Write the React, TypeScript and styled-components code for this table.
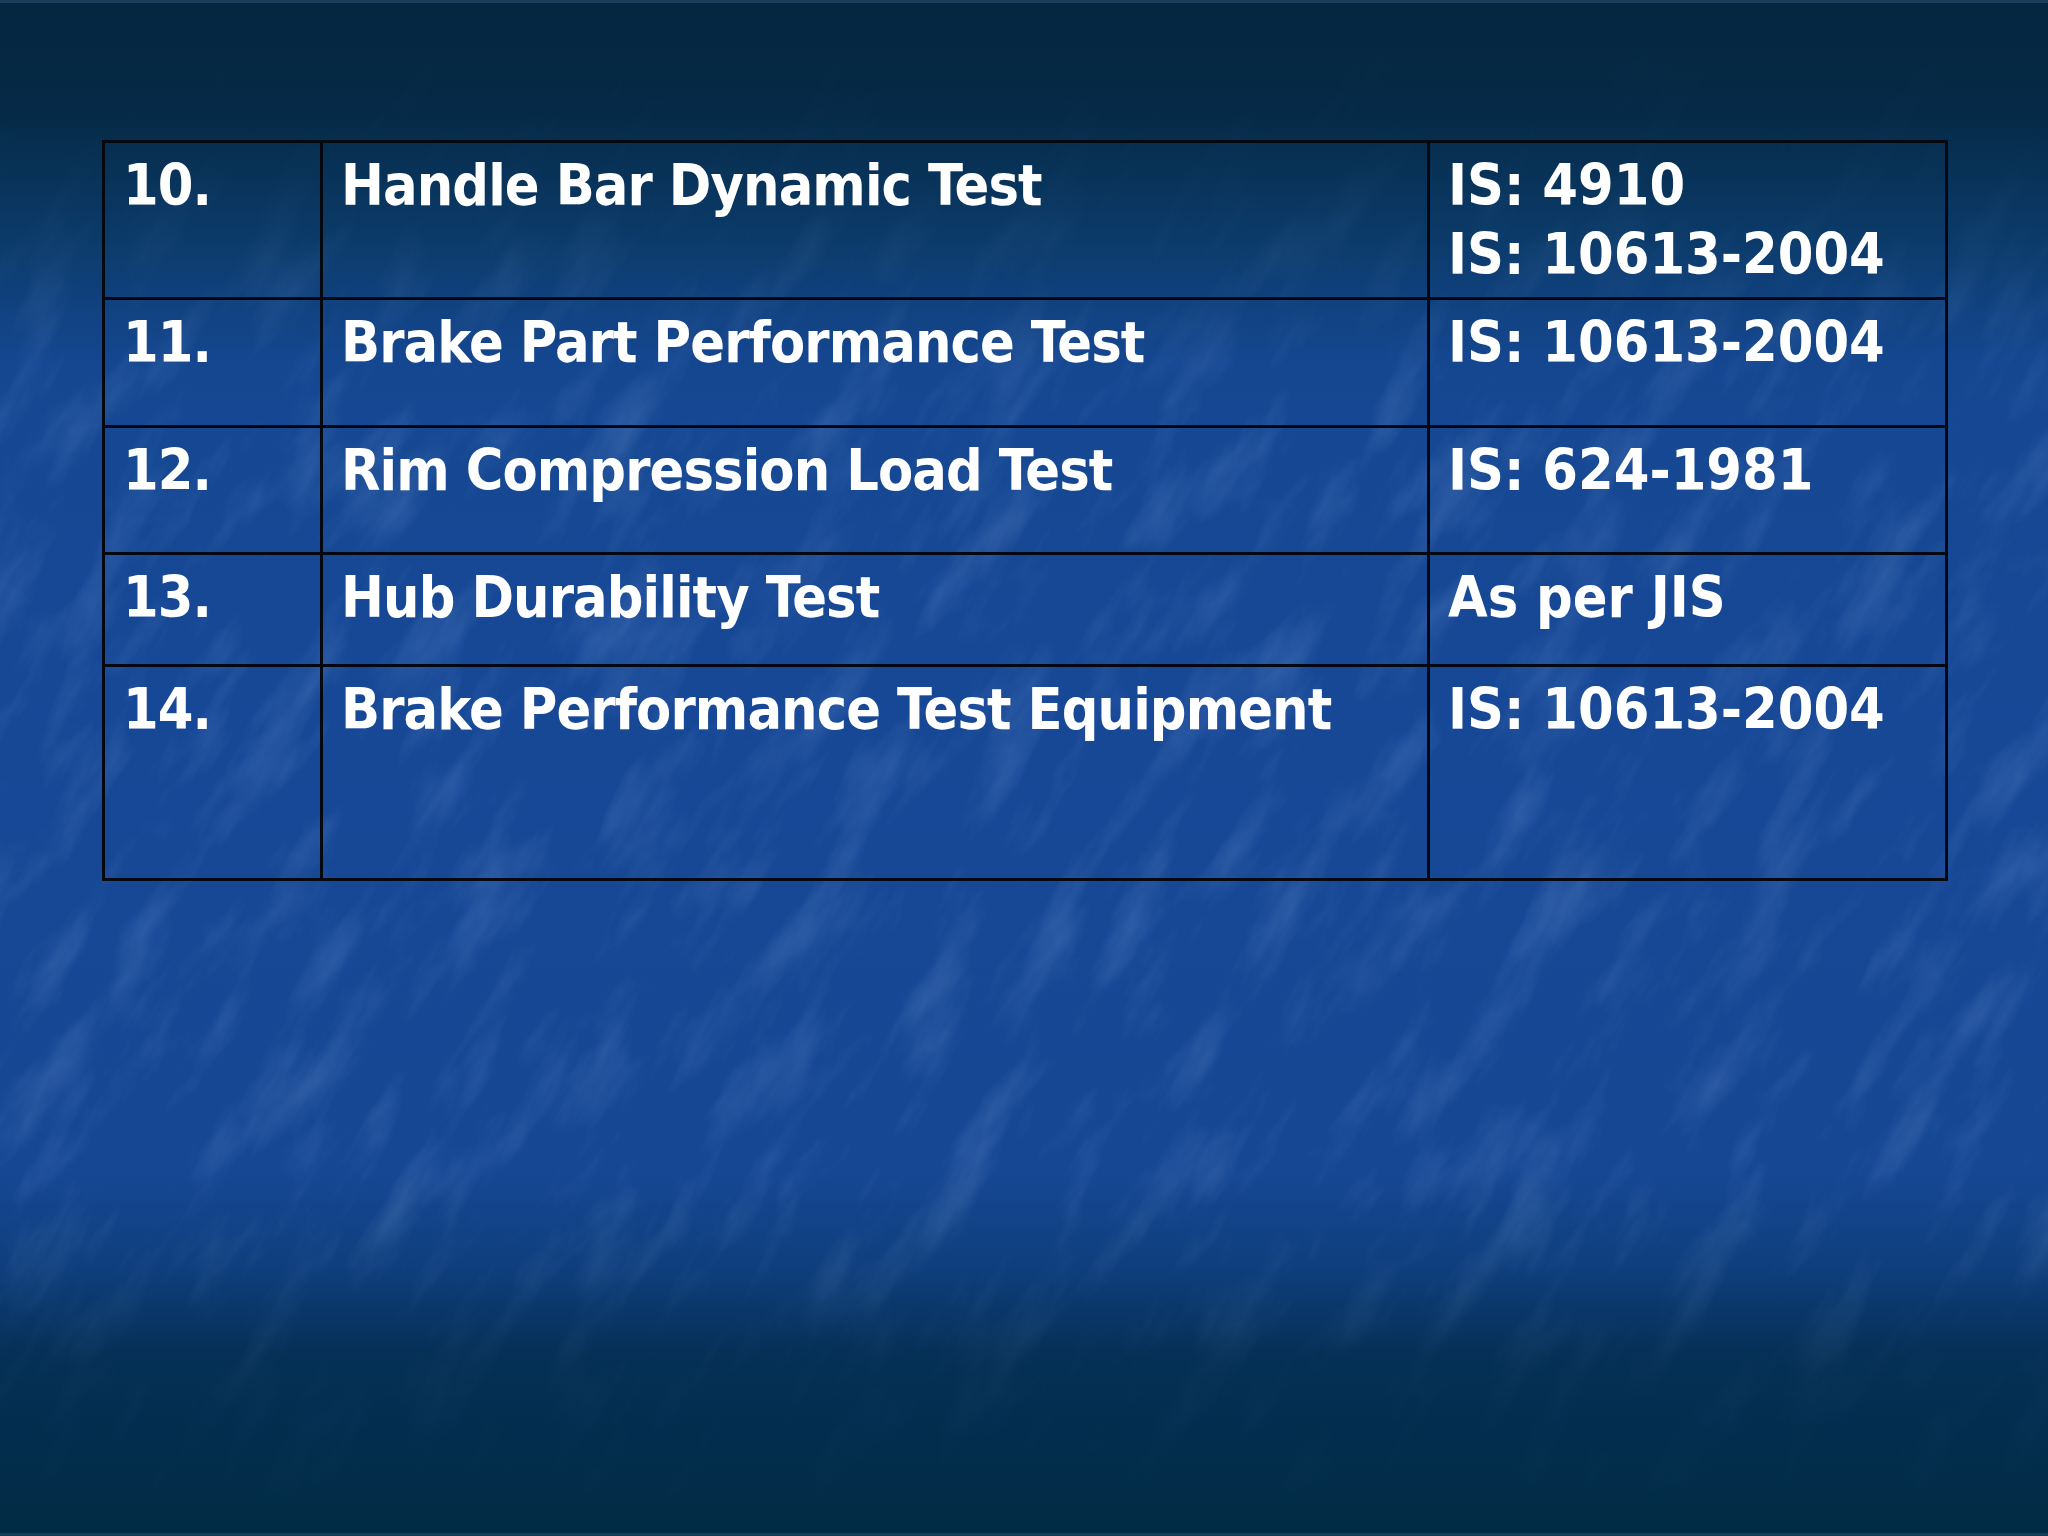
import styled, { createGlobalStyle } from "styled-components";

type Row = {
  num: string;
  name: string;
  standard: string[];
  height: number;
};

const rows: Row[] = [
  { num: "10.", name: "Handle Bar Dynamic Test", standard: ["IS: 4910", "IS: 10613-2004"], height: 157 },
  { num: "11.", name: "Brake Part Performance Test", standard: ["IS: 10613-2004"], height: 128 },
  { num: "12.", name: "Rim Compression Load Test", standard: ["IS: 624-1981"], height: 127 },
  { num: "13.", name: "Hub Durability Test", standard: ["As per JIS"], height: 112 },
  { num: "14.", name: "Brake Performance Test Equipment", standard: ["IS: 10613-2004"], height: 214 },
];

const columns = [218, 1107, 518];

const GlobalStyle = createGlobalStyle`
  html, body {
    margin: 0;
    padding: 0;
    background: #0a3463;
  }
`;

const Slide = styled.div`
  position: relative;
  width: 2048px;
  height: 1536px;
  overflow: hidden;
  box-sizing: border-box;
  border-top: 3px solid #1b3e5a;
  border-bottom: 3px solid #12405a;
  background: linear-gradient(
    to bottom,
    #05263f 0px,
    #052a47 110px,
    #0b3a68 230px,
    #154791 360px,
    #174897 700px,
    #164793 1170px,
    #0f3f7e 1260px,
    #053057 1350px,
    #032d4d 1430px,
    #022c44 1536px
  );
`;

const Texture = styled.svg`
  position: absolute;
  inset: 0;
  width: 100%;
  height: 100%;
  pointer-events: none;
`;

const Content = styled.div`
  position: relative;
  padding: 137px 0 0 102px;
`;

const Table = styled.table`
  width: 1843px;
  border-collapse: collapse;
  table-layout: fixed;
  font-family: "DejaVu Sans Condensed", "DejaVu Sans", sans-serif;
  font-weight: bold;
  font-size: 57px;
  line-height: 69px;
  color: #ffffff;
`;

const Column = styled.col<{ $width: number }>`
  width: ${(p) => p.$width}px;
`;

const TableRow = styled.tr<{ $height: number }>`
  height: ${(p) => p.$height}px;
`;

const Cell = styled.td<{ $numeric?: boolean }>`
  border: 3px solid #05080f;
  vertical-align: top;
  padding: 8px 10px 0 18px;
  white-space: nowrap;
  overflow: hidden;
  letter-spacing: ${(p) => (p.$numeric ? "0px" : "-0.9px")};
`;

const Line = styled.div``;

const Backdrop = () => (
  <Texture viewBox="0 0 2048 1536" preserveAspectRatio="none">
    <defs>
      <filter id="grain" x="0" y="0" width="100%" height="100%">
        <feTurbulence type="fractalNoise" baseFrequency="0.007 0.022" numOctaves="5" seed="11" />
        <feColorMatrix
          type="matrix"
          values="0 0 0 0 0.4  0 0 0 0 0.58  0 0 0 0 0.92  0 0 0 1.3 -0.62"
        />
      </filter>
      <linearGradient id="fade" x1="0" y1="0" x2="0" y2="1">
        <stop offset="0" stopColor="#fff" stopOpacity="0" />
        <stop offset="0.12" stopColor="#fff" stopOpacity="0.15" />
        <stop offset="0.28" stopColor="#fff" stopOpacity="1" />
        <stop offset="0.78" stopColor="#fff" stopOpacity="1" />
        <stop offset="0.9" stopColor="#fff" stopOpacity="0.25" />
        <stop offset="1" stopColor="#fff" stopOpacity="0" />
      </linearGradient>
      <mask id="fadeMask">
        <rect width="2048" height="1536" fill="url(#fade)" />
      </mask>
    </defs>
    <g mask="url(#fadeMask)" opacity="0.3">
      <g transform="rotate(-58 1024 768)">
        <rect x="-800" y="-800" width="3700" height="3200" filter="url(#grain)" />
      </g>
    </g>
  </Texture>
);

const App = () => (
  <Slide>
    <GlobalStyle />
    <Backdrop />
    <Content>
      <Table>
        <colgroup>
          {columns.map((w, i) => (
            <Column key={i} $width={w} />
          ))}
        </colgroup>
        <tbody>
          {rows.map((row) => (
            <TableRow key={row.num} $height={row.height}>
              <Cell>{row.num}</Cell>
              <Cell>{row.name}</Cell>
              <Cell $numeric>
                {row.standard.map((s) => (
                  <Line key={s}>{s}</Line>
                ))}
              </Cell>
            </TableRow>
          ))}
        </tbody>
      </Table>
    </Content>
  </Slide>
);

export default App;
